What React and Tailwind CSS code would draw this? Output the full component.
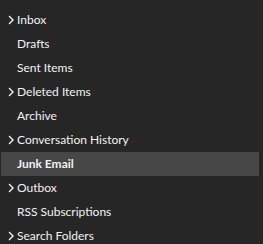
import React from 'react';

const folders = [
  { name: 'Inbox', expandable: true },
  { name: 'Drafts' },
  { name: 'Sent Items' },
  { name: 'Deleted Items', expandable: true },
  { name: 'Archive' },
  { name: 'Conversation History', expandable: true },
  { name: 'Junk Email', selected: true },
  { name: 'Outbox', expandable: true },
  { name: 'RSS Subscriptions' },
  { name: 'Search Folders', expandable: true },
];

const Chevron = () => (
  <svg width="6" height="10" viewBox="0 0 6 10" className="absolute left-[7px] top-[7px]">
    <polyline points="1,1 5,5 1,9" fill="none" stroke="#f2f2f2" strokeWidth="1.4" />
  </svg>
);

export default function App() {
  return (
    <div className="h-[244px] w-[263px] overflow-hidden bg-[#262626] font-['Lato','Open_Sans',sans-serif] text-[12px] text-[#f2f2f2]">
      <div className="-mt-[20px] h-[28px] pl-[17px] leading-[24px] font-semibold">happypig@outlook.com</div>
      <div className="ml-[1px] mr-[4px]">
        {folders.map((f) => (
          <div
            key={f.name}
            className={`relative flex h-[24px] items-center pl-[16px] ${f.selected ? 'bg-[#474747] font-bold' : ''}`}
          >
            {f.expandable && <Chevron />}
            <span>{f.name}</span>
          </div>
        ))}
      </div>
    </div>
  );
}
